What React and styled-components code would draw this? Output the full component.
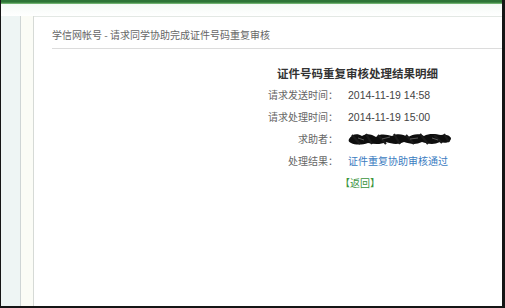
import React from 'react'
import styled, { createGlobalStyle } from 'styled-components'

const GlobalStyle = createGlobalStyle`
  html, body {
    margin: 0;
    padding: 0;
    background: #ffffff;
  }
  body {
    font-family: 'Noto Sans CJK SC', 'Liberation Sans', sans-serif;
  }
`

const Frame = styled.div`
  width: 505px;
  height: 308px;
  box-sizing: border-box;
  border-style: solid;
  border-color: #151515;
  border-width: 0 3px 2px 1px;
  display: flex;
  flex-direction: column;
  overflow: hidden;
  background: #ffffff;
`

const TopBar = styled.div`
  height: 4px;
  flex-shrink: 0;
  background: linear-gradient(#2c7436 0, #2c7436 2px, #4f9a52 3px, #8cc68c 4px);
`

const Body = styled.div`
  flex: 1;
  display: flex;
  padding-top: 12px;
  background: linear-gradient(#f4faf6, #ffffff 12px);
`

const Sidebar = styled.div`
  width: 19px;
  background: #eef5f4;
  border-right: 1px solid #cfd5d5;
`

const Gutter = styled.div`
  width: 12px;
  background: #fbfcf6;
  border-right: 1px solid #d6dad6;
`

const Panel = styled.div`
  flex: 1;
  background: #ffffff;
  border-top: 1px solid #e3e8e4;
  display: flex;
  flex-direction: column;
`

const PanelHeader = styled.div`
  margin-left: 18px;
  padding: 11px 0 6px;
  border-bottom: 1px solid #dcdcdc;
  font-size: 10px;
  line-height: 14px;
  color: #666666;
`

const Details = styled.div`
  margin-left: 224px;
  padding-top: 17px;
  display: grid;
  grid-template-columns: 80px auto;
  grid-auto-rows: 14px;
  column-gap: 10px;
  row-gap: 8px;
  align-items: center;
`

const Title = styled.div`
  grid-column: 1 / 3;
  padding-left: 19px;
  font-size: 11.5px;
  font-weight: bold;
  line-height: 14px;
  color: #333333;
`

const Label = styled.div`
  text-align: right;
  font-size: 10px;
  line-height: 14px;
  color: #666666;
  white-space: nowrap;
`

const Value = styled.div`
  display: flex;
  align-items: center;
  height: 14px;
  font-size: 10.5px;
  line-height: 14px;
  color: #444444;
  font-family: 'Liberation Sans', 'Noto Sans CJK SC', sans-serif;
  white-space: nowrap;
`

const ResultLink = styled.div`
  font-size: 10px;
  line-height: 14px;
  color: #3b7cbf;
  white-space: nowrap;
`

const BackLink = styled.div`
  grid-column: 1 / 3;
  padding-left: 82px;
  font-size: 10px;
  line-height: 14px;
  color: #3a943c;
`

function Scribble() {
  return (
    <svg width="104" height="14" viewBox="0 0 104 14" style={{ display: 'block' }}>
      <path
        d="M1 7 C4 2 9 1 14 4 C18 1 24 2 28 5 C33 1 39 3 44 4 C49 1 55 2 60 5 C65 2 71 1 76 4 C81 1 88 2 93 3 C97 2 102 3 103 6 C103 10 98 12 92 10 C86 13 80 12 74 10 C68 13 62 12 56 10 C50 13 44 12 38 10 C32 13 26 12 20 11 C14 13 7 13 3 11 C1 10 0 9 1 7 Z"
        fill="#0e0e0e"
      />
      <path
        d="M4 3 L12 12 M18 2 L24 12 M30 3 L38 12 M46 2 L52 12 M58 3 L66 12 M72 2 L80 12 M86 3 L94 11 M96 2 L101 10"
        stroke="#1a1a1a"
        strokeWidth="2.2"
        fill="none"
      />
      <path d="M10 6 L16 8 M34 7 L42 5 M62 7 L70 6 M84 6 L90 8" stroke="#6a6a6a" strokeWidth="0.8" />
    </svg>
  )
}

export default function App() {
  return (
    <Frame>
      <GlobalStyle />
      <TopBar />
      <Body>
        <Sidebar />
        <Gutter />
        <Panel>
          <PanelHeader>学信网帐号 - 请求同学协助完成证件号码重复审核</PanelHeader>
          <Details>
            <Title>证件号码重复审核处理结果明细</Title>
            <Label>请求发送时间：</Label>
            <Value>2014-11-19 14:58</Value>
            <Label>请求处理时间：</Label>
            <Value>2014-11-19 15:00</Value>
            <Label>求助者：</Label>
            <Value>
              <Scribble />
            </Value>
            <Label>处理结果：</Label>
            <ResultLink>证件重复协助审核通过</ResultLink>
            <BackLink>【返回】</BackLink>
          </Details>
        </Panel>
      </Body>
    </Frame>
  )
}
